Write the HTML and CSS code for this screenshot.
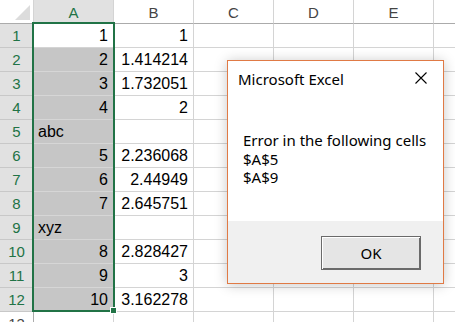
FILE: index.html
```html
<!DOCTYPE html>
<html lang="en">
<head>
  <meta charset="UTF-8">
  <title>Microsoft Excel</title>
  <link rel="stylesheet" href="styles.css">
</head>
<body>
  <div class="sheet">
    <div class="grid">
      <div class="corner"><span class="tri"></span></div>
      <div class="ch sel">A</div>
      <div class="ch">B</div>
      <div class="ch">C</div>
      <div class="ch">D</div>
      <div class="ch">E</div>
      <div class="ch"></div>

      <div class="rh sel">1</div>
      <div class="c num">1</div><div class="c num">1</div><div class="c"></div><div class="c"></div><div class="c"></div><div class="c"></div>

      <div class="rh sel">2</div>
      <div class="c num hl">2</div><div class="c num">1.414214</div><div class="c"></div><div class="c"></div><div class="c"></div><div class="c"></div>

      <div class="rh sel">3</div>
      <div class="c num hl">3</div><div class="c num">1.732051</div><div class="c"></div><div class="c"></div><div class="c"></div><div class="c"></div>

      <div class="rh sel">4</div>
      <div class="c num hl">4</div><div class="c num">2</div><div class="c"></div><div class="c"></div><div class="c"></div><div class="c"></div>

      <div class="rh sel">5</div>
      <div class="c hl">abc</div><div class="c"></div><div class="c"></div><div class="c"></div><div class="c"></div><div class="c"></div>

      <div class="rh sel">6</div>
      <div class="c num hl">5</div><div class="c num">2.236068</div><div class="c"></div><div class="c"></div><div class="c"></div><div class="c"></div>

      <div class="rh sel">7</div>
      <div class="c num hl">6</div><div class="c num">2.44949</div><div class="c"></div><div class="c"></div><div class="c"></div><div class="c"></div>

      <div class="rh sel">8</div>
      <div class="c num hl">7</div><div class="c num">2.645751</div><div class="c"></div><div class="c"></div><div class="c"></div><div class="c"></div>

      <div class="rh sel">9</div>
      <div class="c hl">xyz</div><div class="c"></div><div class="c"></div><div class="c"></div><div class="c"></div><div class="c"></div>

      <div class="rh sel">10</div>
      <div class="c num hl">8</div><div class="c num">2.828427</div><div class="c"></div><div class="c"></div><div class="c"></div><div class="c"></div>

      <div class="rh sel">11</div>
      <div class="c num hl">9</div><div class="c num">3</div><div class="c"></div><div class="c"></div><div class="c"></div><div class="c"></div>

      <div class="rh sel">12</div>
      <div class="c num hl">10</div><div class="c num">3.162278</div><div class="c"></div><div class="c"></div><div class="c"></div><div class="c"></div>

      <div class="rh">13</div>
      <div class="c"></div><div class="c"></div><div class="c"></div><div class="c"></div><div class="c"></div><div class="c"></div>
    </div>

    <div class="selection"></div>
    <div class="handle"></div>

    <div class="dialog">
      <div class="dlg-title">
        <span>Microsoft Excel</span>
        <svg class="close" width="12" height="12" viewBox="0 0 12 12">
          <path d="M0.5 0.5 L11.5 11.5 M11.5 0.5 L0.5 11.5" stroke="#000" stroke-width="1.1" fill="none"/>
        </svg>
      </div>
      <div class="dlg-body">
        <div>Error in the following cells</div>
        <div>$A$5</div>
        <div>$A$9</div>
      </div>
      <div class="dlg-foot">
        <button class="ok">OK</button>
      </div>
    </div>
  </div>
</body>
</html>
```

FILE: styles.css
```css
body {
  margin: 0;
  overflow: hidden;
  background: #fff;
  font-family: "Liberation Sans", Arial, sans-serif;
}

.sheet {
  position: relative;
  width: 455px;
  height: 322px;
  overflow: hidden;
}

.grid {
  display: grid;
  grid-template-columns: 34px repeat(6, 80px);
  grid-template-rows: repeat(14, 24px);
}

.grid > div {
  box-sizing: border-box;
  overflow: hidden;
  white-space: nowrap;
}

.corner {
  position: relative;
  border-right: 1px solid #d4d4d4;
  border-bottom: 1px solid #ababab;
}

.tri {
  position: absolute;
  right: 3px;
  bottom: 3px;
  width: 0;
  height: 0;
  border-left: 15px solid transparent;
  border-bottom: 15px solid #dcdcdc;
}

.ch {
  text-align: center;
  font-size: 15px;
  line-height: 21px;
  padding-top: 2px;
  color: #444;
  border-right: 1px solid #d4d4d4;
  border-bottom: 1px solid #ababab;
}

.ch.sel {
  background: #e1e1e1;
  color: #217346;
}

.rh {
  text-align: center;
  font-size: 15px;
  line-height: 23px;
  color: #444;
  border-right: 1px solid #ababab;
  border-bottom: 1px solid #d4d4d4;
}

.rh.sel {
  background: #e1e1e1;
  color: #217346;
  border-bottom-color: #c8c8c8;
}

.c {
  font-size: 16px;
  line-height: 23px;
  padding: 0 4px 0 4px;
  color: #000;
  border-right: 1px solid #d4d4d4;
  border-bottom: 1px solid #d4d4d4;
}

.c.num {
  text-align: right;
  padding-right: 5px;
}

.c.hl {
  background: #c6c6c6;
  border-bottom-color: #d6d6d6;
}

/* selection frame around A1:A12 */
.selection {
  position: absolute;
  left: 32px;
  top: 22px;
  width: 83px;
  height: 290px;
  box-sizing: border-box;
  border: 2px solid #217346;
}

.handle {
  position: absolute;
  left: 110px;
  top: 307px;
  width: 7px;
  height: 7px;
  box-sizing: border-box;
  background: #217346;
  border: 1px solid #fff;
}

/* message box */
.dialog {
  position: absolute;
  left: 227px;
  top: 60px;
  width: 217px;
  height: 224px;
  box-sizing: border-box;
  border: 1px solid #e07a45;
  background: #fff;
  box-shadow: 0 1px 12px rgba(0, 0, 0, 0.22);
  display: flex;
  flex-direction: column;
  font-family: "Noto Sans", sans-serif;
  color: #000;
}

.dlg-title {
  display: flex;
  justify-content: space-between;
  align-items: flex-start;
  padding: 8px 16px 0 10px;
  font-size: 15px;
  line-height: 20px;
}

.close {
  margin-top: 3px;
}

.dlg-body {
  flex: 1;
  padding: 42px 0 0 15px;
  font-size: 15px;
  line-height: 18.5px;
}

.dlg-foot {
  height: 62px;
  box-sizing: border-box;
  background: #f0f0f0;
  display: flex;
  justify-content: flex-end;
  align-items: flex-start;
  padding: 15px 22px 0 0;
}

.ok {
  width: 100px;
  height: 34px;
  box-sizing: border-box;
  margin: 0;
  padding: 0;
  background: #e5e5e5;
  border: 1px solid #6a6a6a;
  box-shadow: inset 1px 1px 0 #fff, inset -1px -1px 0 #6a6a6a;
  font-family: "Noto Sans", sans-serif;
  font-size: 15px;
  color: #000;
}
```
